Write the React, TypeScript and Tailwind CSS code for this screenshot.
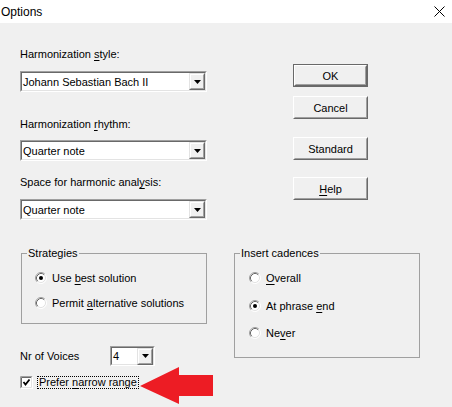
import type { ReactNode } from "react";

const font = "font-['Liberation_Sans',Arial,sans-serif]";

function Mn({ children }: { children: ReactNode }) {
  return <span className="underline underline-offset-[2px]">{children}</span>;
}

function DropArrow() {
  return (
    <div className="w-[16px] h-[17px] border border-t-[#e3e3e3] border-l-[#e3e3e3] border-r-[#696969] border-b-[#696969]">
      <div className="w-full h-full border border-t-white border-l-white border-r-[#a0a0a0] border-b-[#a0a0a0] bg-[#f0f0f0] flex items-center justify-center">
        <svg width="7" height="4" viewBox="0 0 7 4">
          <polygon points="0,0 7,0 3.5,4" fill="#000" />
        </svg>
      </div>
    </div>
  );
}

function Combo({ value, className }: { value: string; className: string }) {
  return (
    <div className={`${className} border border-t-[#a0a0a0] border-l-[#a0a0a0] border-r-white border-b-white`}>
      <div className="w-full h-full border border-t-[#696969] border-l-[#696969] border-r-[#e3e3e3] border-b-[#e3e3e3] bg-white flex items-center justify-between">
        <span className="pl-[1px] text-[11px] leading-[14px]">{value}</span>
        <DropArrow />
      </div>
    </div>
  );
}

function PushButton({ children, isDefault, className = "" }: { children: ReactNode; isDefault?: boolean; className?: string }) {
  const face = (
    <div className="w-full h-full border border-t-white border-l-white border-r-[#696969] border-b-[#696969]">
      <div className="w-full h-full border border-t-[#f0f0f0] border-l-[#f0f0f0] border-r-[#a0a0a0] border-b-[#a0a0a0] bg-[#f0f0f0] flex items-center justify-center text-[11px] leading-[14px]">
        {children}
      </div>
    </div>
  );
  return (
    <div className={`w-[75px] h-[23px] ${className}`}>
      {isDefault ? <div className="w-full h-full border border-[#696969]">{face}</div> : face}
    </div>
  );
}

function Radio({ checked }: { checked?: boolean }) {
  return (
    <svg width="12" height="12" viewBox="0 0 12 12" className="shrink-0">
      <circle cx="6" cy="6" r="5" fill="#fff" />
      <path d="M2.11 9.89 A5.5 5.5 0 0 1 9.89 2.11" fill="none" stroke="#a0a0a0" />
      <path d="M9.89 2.11 A5.5 5.5 0 0 1 2.11 9.89" fill="none" stroke="#fff" />
      <path d="M2.82 9.18 A4.5 4.5 0 0 1 9.18 2.82" fill="none" stroke="#696969" />
      <path d="M9.18 2.82 A4.5 4.5 0 0 1 2.82 9.18" fill="none" stroke="#e3e3e3" />
      {checked && <circle cx="6" cy="6" r="2" fill="#000" />}
    </svg>
  );
}

function RadioRow({ checked, children, className = "" }: { checked?: boolean; children: ReactNode; className?: string }) {
  return (
    <div className={`flex items-center h-[14px] ${className}`}>
      <Radio checked={checked} />
      <span className="ml-[5px] text-[11px] leading-[14px] whitespace-nowrap">{children}</span>
    </div>
  );
}

function GroupBox({ title, className, children }: { title: string; className: string; children: ReactNode }) {
  return (
    <div className={`relative border border-[#a0a0a0] ${className}`}>
      <span className="absolute top-[-8px] left-[5px] px-[1px] bg-[#f0f0f0] text-[11px] leading-[14px]">{title}</span>
      {children}
    </div>
  );
}

export default function App() {
  return (
    <div className={`${font} w-[452px] h-[407px] bg-[#f0f0f0] text-black overflow-hidden`}>
      {/* title bar */}
      <div className="h-[23px] bg-white flex items-center justify-between pl-[1px] pr-[7px]">
        <span className="text-[12px] leading-[16px]">Options</span>
        <svg width="11" height="11" viewBox="0 0 11 11">
          <path d="M0.5 0.5 L10.5 10.5 M10.5 0.5 L0.5 10.5" stroke="#000" strokeWidth="1" />
        </svg>
      </div>

      {/* combos + buttons */}
      <div className="flex pl-[20px] pt-[24px]">
        <div className="w-[187px] flex flex-col">
          <div className="text-[11px] leading-[14px]">
            Harmonization <Mn>s</Mn>tyle:
          </div>
          <Combo value="Johann Sebastian Bach II" className="mt-[10px] w-[187px] h-[21px]" />
          <div className="mt-[25px] text-[11px] leading-[14px]">
            Harmonization <Mn>r</Mn>hythm:
          </div>
          <Combo value="Quarter note" className="mt-[9px] w-[187px] h-[21px]" />
          <div className="mt-[14px] text-[11px] leading-[14px]">
            Space for harmonic anal<Mn>y</Mn>sis:
          </div>
          <Combo value="Quarter note" className="mt-[10px] w-[187px] h-[21px]" />
        </div>
        <div className="ml-[86px] flex flex-col pt-[17px]">
          <PushButton isDefault>OK</PushButton>
          <PushButton className="mt-[9px]">Cancel</PushButton>
          <PushButton className="mt-[18px]">Standard</PushButton>
          <PushButton className="mt-[17px]">
            <Mn>H</Mn>elp
          </PushButton>
        </div>
      </div>

      {/* group boxes */}
      <div className="flex mt-[33px] pl-[21px]">
        <div className="w-[186px] flex flex-col">
          <GroupBox title="Strategies" className="w-[186px] h-[71px] pt-[17px] pl-[13px]">
            <RadioRow checked>
              Use <Mn>b</Mn>est solution
            </RadioRow>
            <RadioRow className="mt-[11px]">
              Permit <Mn>a</Mn>lternative solutions
            </RadioRow>
          </GroupBox>

          <div className="flex items-center ml-[-1px] mt-[22px] h-[20px]">
            <span className="w-[90px] text-[11px] leading-[14px]">Nr of Voices</span>
            <Combo value="4" className="w-[45px] h-[20px]" />
          </div>

          <div className="relative flex items-center ml-[-1px] mt-[10px] h-[13px]">
            <svg width="13" height="13" viewBox="0 0 13 13" className="shrink-0">
              <rect x="0" y="0" width="13" height="13" fill="#fff" />
              <path d="M0.5 12.5 V0.5 H12.5" fill="none" stroke="#a0a0a0" />
              <path d="M12.5 0.5 V12.5 H0.5" fill="none" stroke="#fff" />
              <path d="M1.5 11.5 V1.5 H11.5" fill="none" stroke="#696969" />
              <path d="M11.5 1.5 V11.5 H1.5" fill="none" stroke="#e3e3e3" />
              <path d="M3.5 6 L5.5 8.5 L9.5 3.5" fill="none" stroke="#000" strokeWidth="1.8" />
            </svg>
            <span className="ml-[4px] h-[13px] shrink-0 whitespace-nowrap border border-dotted border-black px-[1px] text-[11px] leading-[11px]">
              Prefer <Mn>n</Mn>arrow range
            </span>
            <svg width="74" height="37" viewBox="0 0 74 37" className="absolute left-[120px] top-[-9px]">
              <polygon points="0,19 39,0 39,8 73,8 73,29 39,29 39,37" fill="#ed1c24" />
            </svg>
          </div>
        </div>

        <GroupBox title="Insert cadences" className="ml-[27px] w-[186px] h-[105px] pt-[17px] pl-[14px]">
          <RadioRow>
            <Mn>O</Mn>verall
          </RadioRow>
          <RadioRow checked className="mt-[14px]">
            At phrase <Mn>e</Mn>nd
          </RadioRow>
          <RadioRow className="mt-[13px]">
            Ne<Mn>v</Mn>er
          </RadioRow>
        </GroupBox>
      </div>
    </div>
  );
}
